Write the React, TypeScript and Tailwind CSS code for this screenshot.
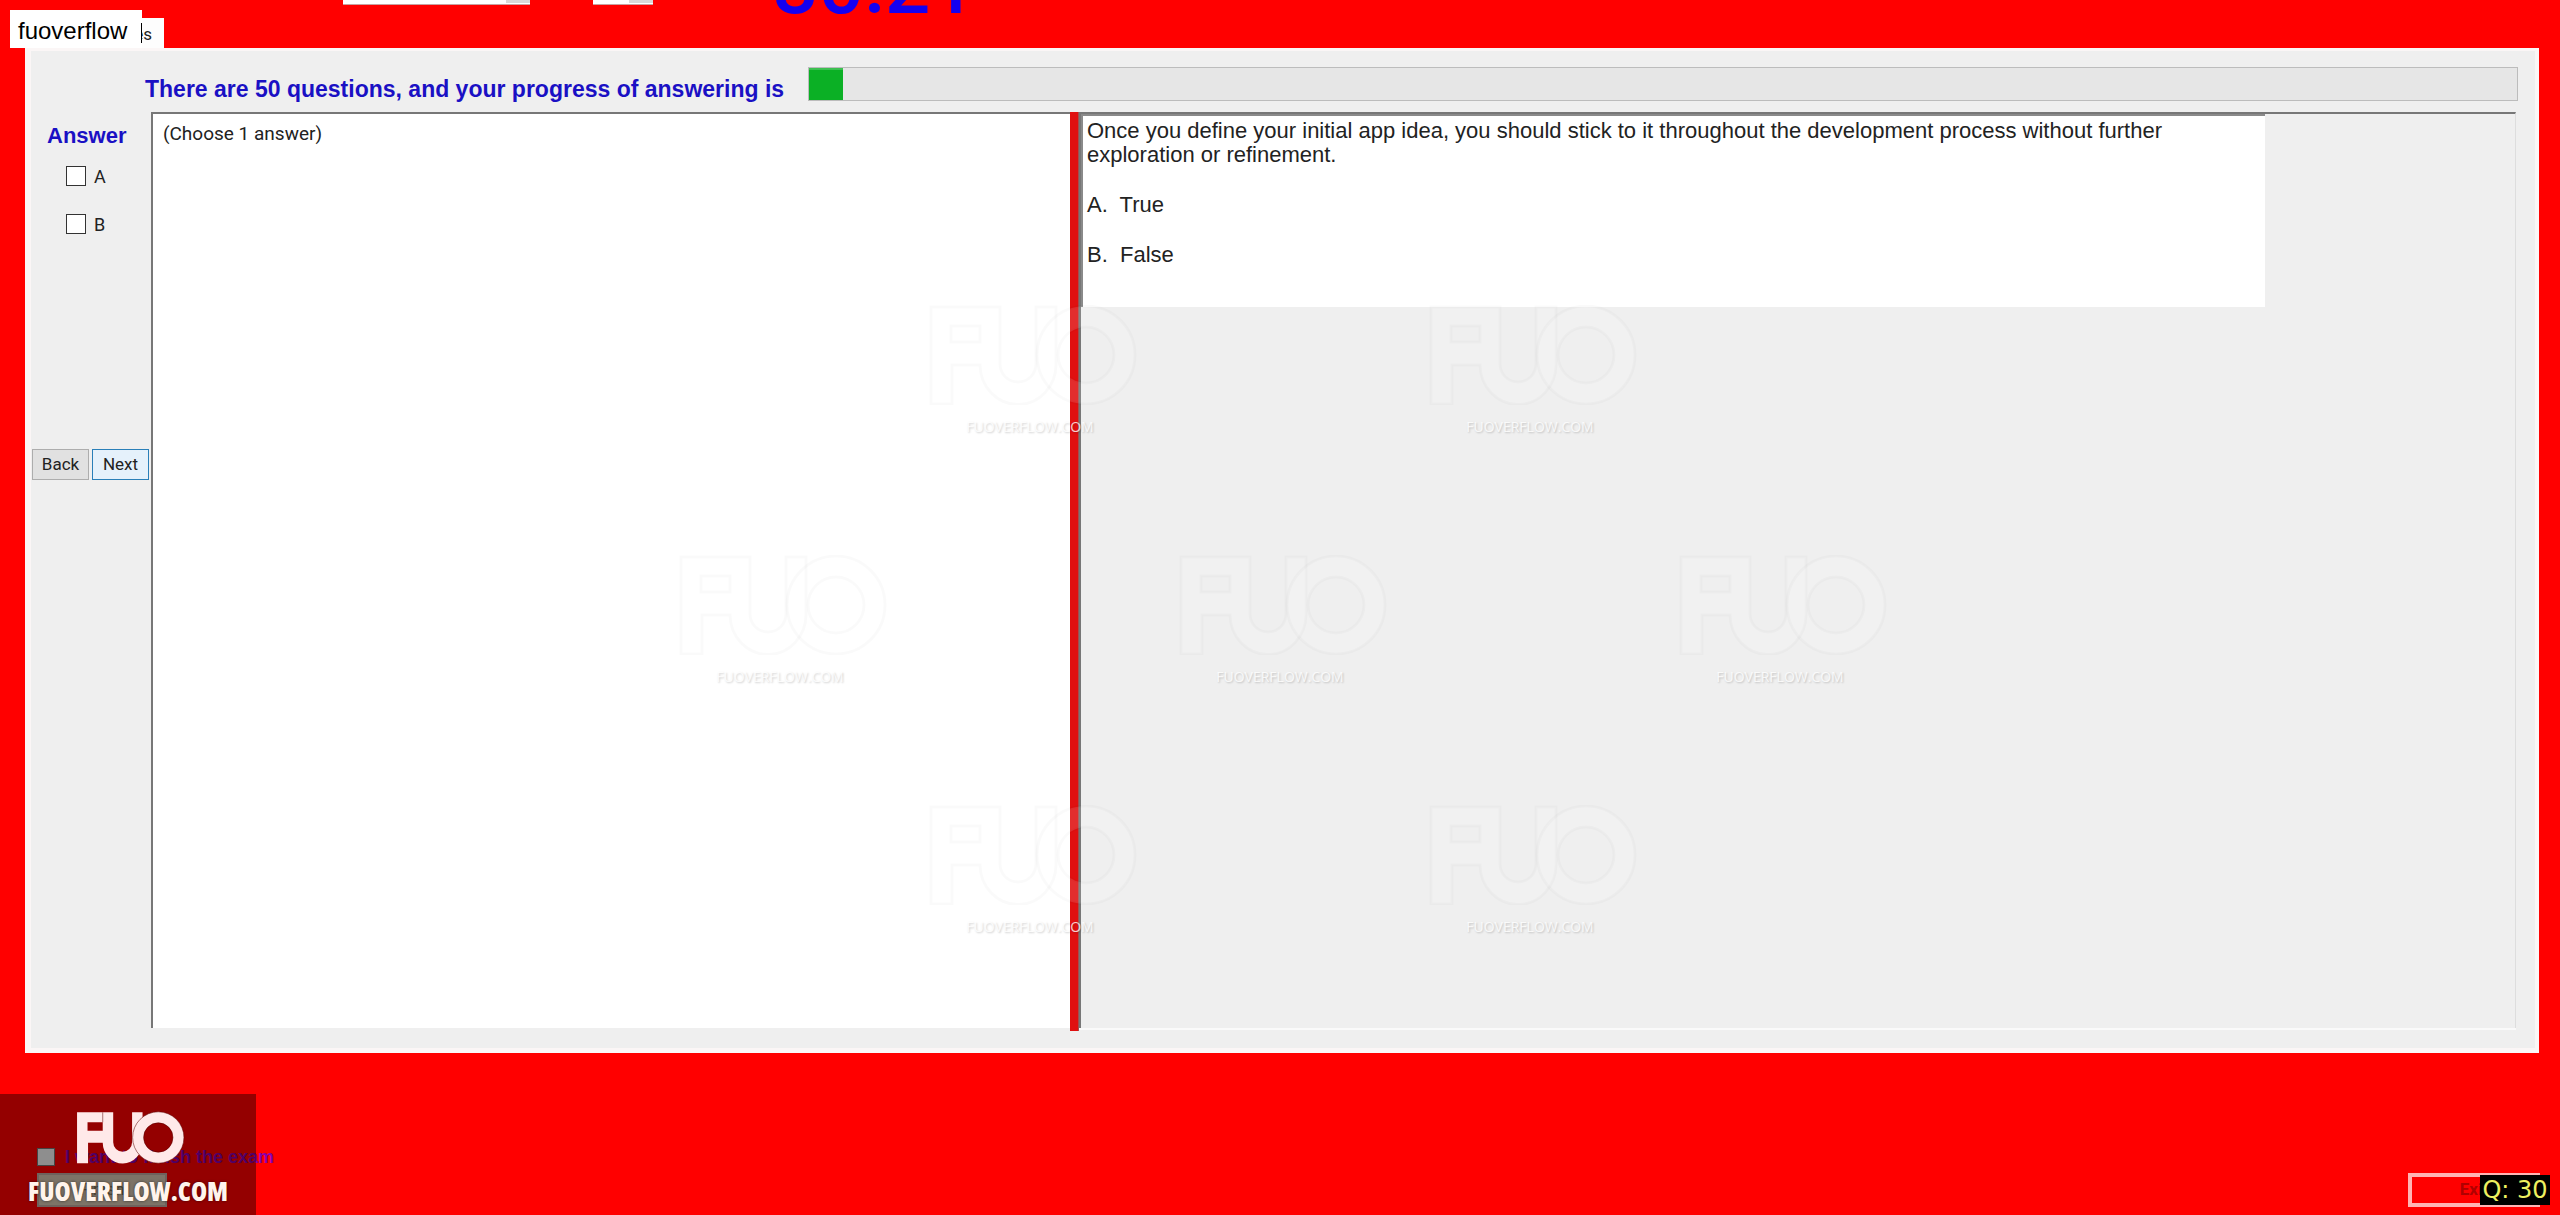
import { useState } from "react";

const FU_PATH =
  "M2 2H71V59A18 18 0 0 0 107 59V2H127V59A38 40 0 0 1 51 60H23V99H2ZM22 21V37H51V21Z";
const O_PATH =
  "M157 1A49 49 0 1 1 157 99A49 49 0 1 1 157 1ZM157 22A28 28 0 1 0 157 78A28 28 0 1 0 157 22Z";

function Logo() {
  return (
    <svg viewBox="0 0 208 100" className="w-[109px] h-[53px]" aria-hidden="true">
      <path d={FU_PATH} fill="#ffe9e9" fillRule="evenodd" />
      <path d="M51 2V21" stroke="#5a0000" strokeWidth="1" />
      <path d={O_PATH} fill="#ffe9e9" fillRule="evenodd" stroke="#5a0000" strokeWidth="1" />
    </svg>
  );
}

function Watermark() {
  return (
    <div className="w-[500px] h-[250px] flex flex-col items-center gap-3">
      <div className="pl-[5px]">
        <svg viewBox="0 0 208 100" className="w-[208px] h-[100px]" aria-hidden="true">
          <g fill="#ffffff" fillOpacity="0.12" stroke="#000000" strokeOpacity="0.02" strokeWidth="3">
            <path d={FU_PATH} fillRule="evenodd" />
            <path d={O_PATH} fillRule="evenodd" />
          </g>
        </svg>
      </div>
      <span className="font-['Open_Sans',sans-serif] text-[14px] leading-5 text-white/80 [text-shadow:1px_1px_2px_rgba(0,0,0,0.2)]">
        FUOVERFLOW.COM
      </span>
    </div>
  );
}

export default function App() {
  const [checked, setChecked] = useState<Record<string, boolean>>({});
  const total = 50;
  const answered = 1;

  return (
    <main className="relative min-h-screen flex flex-col overflow-hidden bg-[#ff0000] font-['Roboto',sans-serif] text-[#222222]">
      {/* toolbar, scrolled mostly out of view */}
      <header className="h-12 flex items-end overflow-hidden pl-[25px]">
        <div className="w-[139px] h-[30px] bg-[#fdfdfd] pr-3 text-right text-[17px] leading-8">
          es
        </div>
        <div className="self-start flex items-end h-[5px] pl-[179px]">
          <div className="w-[187px] h-7 bg-white border-b border-[#c8a0a0] flex justify-end">
            <span className="w-6 h-[26px] bg-[#d8d8d8]" />
          </div>
          <div className="w-[60px] h-7 ml-[63px] bg-white border-b border-[#c8a0a0] flex justify-end">
            <span className="w-6 h-[26px] bg-[#d8d8d8]" />
          </div>
        </div>
        <div className="self-start flex items-end h-8 pl-[120px]">
          <div className="text-[80px] leading-[92px] font-medium text-[#1400f0]">30:21</div>
        </div>
      </header>

      <section className="flex-1 flex flex-col ml-[25px] mr-[21px] bg-[#efefef] border-t-[3px] border-l-[6px] border-r-[4px] border-b-[5px] border-[#fbf6f6] pr-[17px] pb-5">
        <div className="h-[61px] pt-4 pl-[114px] flex gap-6">
          <div className="pt-[10px] text-[23px] leading-6 font-bold font-['Liberation_Sans',sans-serif] text-[#1a10c4] whitespace-nowrap">
            There are {total} questions, and your progress of answering is
          </div>
          <div
            role="progressbar"
            aria-valuenow={answered}
            aria-valuemax={total}
            className="flex-1 h-[34px] bg-[#e6e6e6] border border-[#bcbcbc]"
          >
            <div
              className="h-full bg-[#0bb025] border-t-2 border-[#3cc050]"
              style={{ width: `${(answered / total) * 100}%` }}
            />
          </div>
        </div>

        <div className="flex-1 flex pr-[2px]">
          {/* answers */}
          <aside className="w-[120px] flex flex-col">
            <h2 className="pl-4 pt-3 text-[22px] leading-6 font-bold font-['Liberation_Sans',sans-serif] text-[#1a10c4]">
              Answer
            </h2>
            <div className="pt-4 pl-[35px] flex flex-col gap-6">
              {["A", "B"].map((key) => (
                <label key={key} className="h-6 flex items-center gap-2 text-[18px]">
                  <input
                    type="checkbox"
                    className="appearance-none w-5 h-5 bg-white border border-[#333333] checked:bg-[#333333]"
                    checked={!!checked[key]}
                    onChange={(e) => setChecked((prev) => ({ ...prev, [key]: e.target.checked }))}
                  />
                  {key}
                </label>
              ))}
            </div>
            <div className="pt-[213px] px-[1px] flex gap-[3px] text-[17px]">
              <button type="button" className="w-[57px] h-[31px] bg-[#e1e1e1] border border-[#adadad]">
                Back
              </button>
              <button type="button" className="w-[57px] h-[31px] bg-[#e5f1fb] border border-[#2a7fb8]">
                Next
              </button>
            </div>
          </aside>

          <div className="flex-[897] bg-white border-t-2 border-l-2 border-[#777777] px-[10px] py-2 text-[19px] leading-6">
            (Choose 1 answer)
          </div>
          <div className="w-[9px] bg-[#e01010] border-r border-[#a05050] -mb-[3px]" />

          {/* question */}
          <div className="flex-[1434] min-w-0 border-t-2 border-l-2 border-r border-[#777777] border-r-[#dddddd] shadow-[0_2px_0_#fafafa]">
            <div className="w-[1184px] max-w-full h-[193px] bg-white border-t-2 border-l-2 border-[#8a8a8a] pl-1 pt-[3px] text-[22px] leading-6 font-['Liberation_Sans',sans-serif]">
              <p>
                Once you define your initial app idea, you should stick to it throughout the development process without further
                <br />
                exploration or refinement.
              </p>
              <p className="pt-[26px] whitespace-pre">A.  True</p>
              <p className="pt-[26px] whitespace-pre">B.  False</p>
            </div>
          </div>
        </div>
      </section>

      <footer className="h-[162px] flex justify-between items-end pl-[37px] pr-5 pb-2">
        <div className="flex flex-col gap-1">
          <label className="flex items-center gap-[10px] h-6 text-[18px] font-bold font-['Liberation_Sans',sans-serif] text-[#8800b0]">
            <input type="checkbox" className="appearance-none w-[18px] h-[18px] bg-[#f4f4f4] border border-[#777777]" />
            I want to finish the exam
          </label>
          <button type="button" className="w-[130px] h-[34px] bg-[#d8c8b4] border-2 border-[#c0aaa0] text-[17px] text-[#8a8060]">
            Finish
          </button>
        </div>
        <button
          type="button"
          className="w-[132px] h-[34px] border-4 border-[#ffb4b4] text-[17px] font-bold text-[#b00000]"
        >
          Exit
        </button>
      </footer>

      {/* brand plate over the bottom left corner */}
      <div className="absolute left-0 bottom-0 w-[256px] h-[121px] bg-black/42 flex flex-col items-center pt-[17px]">
        <div className="pl-1">
          <Logo />
        </div>
        <span className="pt-[7px] font-['Open_Sans',sans-serif] font-extrabold text-[26px] leading-[40px] text-[#fff4ec] [font-stretch:75%] [text-shadow:0_0_3px_rgba(0,0,0,0.6)]">
          FUOVERFLOW.COM
        </span>
      </div>

      <div className="absolute right-[10px] bottom-[10px] w-[70px] h-[30px] bg-black text-center text-[24px] leading-[30px] text-[#eef060] font-['DejaVu_Sans',sans-serif]">
        Q: 30
      </div>

      <div className="absolute left-[10px] top-[10px] w-[132px] h-[38px] bg-white pl-2 pt-1 flex items-center justify-between text-[24px] text-black font-['Liberation_Sans',sans-serif]">
        fuoverflow
        <span className="w-px h-5 mt-1 bg-black" />
      </div>

      <div className="absolute inset-x-0 top-[305px] flex flex-col items-center pointer-events-none">
        {[2, 3, 2].map((count, row) => (
          <div key={row} className="flex">
            {Array.from({ length: count }, (_, i) => (
              <Watermark key={i} />
            ))}
          </div>
        ))}
      </div>
    </main>
  );
}
